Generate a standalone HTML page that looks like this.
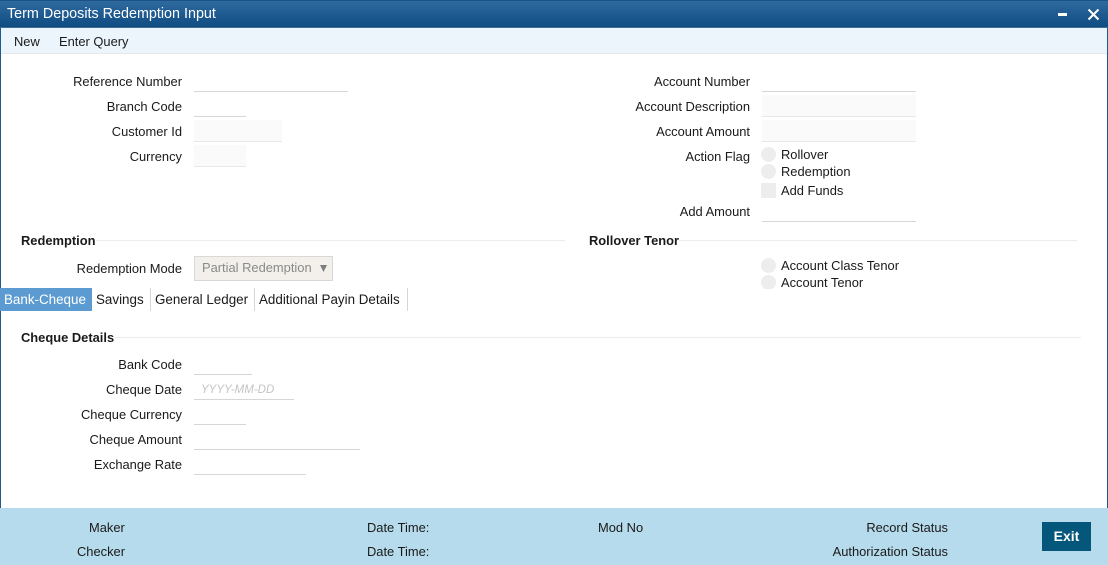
<!DOCTYPE html>
<html><head><meta charset="utf-8">
<style>
html,body{margin:0;padding:0;background:#fff}
#p{position:relative;width:1108px;height:565px;overflow:hidden;background:#fff;font-family:"Liberation Sans",Arial,sans-serif;font-size:12.9px;color:#1a1a1a}
#p div{position:absolute;box-sizing:border-box}
.t{white-space:nowrap;height:20px;line-height:20px}
.l{white-space:nowrap;height:20px;line-height:20px;text-align:right;width:182px;left:0}
.l2{white-space:nowrap;height:20px;line-height:20px;text-align:right;width:750px;left:0}
.b{font-weight:bold}
.tab{font-size:13.4px}
.i{border-bottom:1px solid #d6d6d6;height:22px}
.ro{background:#fafafa;border-bottom:1px solid #e8e8e8}
.r{width:15px;height:15px;border-radius:50%;background:#eeeded}
.h{height:1px;background:#ececec}
</style></head><body>
<div id="p">
<div style="left:0;top:0;width:1108px;height:28px;background:linear-gradient(#2f6a9f,#0f4c82);border-top:1px solid #1a5288;border-bottom:1px solid #3d6f94"></div>
<div class="t" style="left:7px;top:4px;color:#fff;font-size:14.35px">Term Deposits Redemption Input</div>
<svg style="position:absolute;left:1058px;top:8px" width="42" height="14"><rect x="0" y="5" width="9" height="3" fill="#fff"/><path d="M30.5 1.5L40.5 11.5M40.5 1.5L30.5 11.5" stroke="#fff" stroke-width="2" fill="none"/></svg>
<div style="left:0;top:28px;width:1108px;height:26px;background:#edf5fc;border-bottom:1px solid #e4e8ea"></div>
<div class="t" style="left:14px;top:32px">New</div>
<div class="t" style="left:59px;top:32px">Enter Query</div>
<div style="left:0;top:28px;width:1px;height:480px;background:#1f5a8c"></div>
<div style="right:0;top:28px;width:1px;height:480px;background:#1f5a8c"></div>

<div class="l" style="top:72px">Reference Number</div>
<div class="i" style="left:194px;top:70px;width:154px"></div>
<div class="l" style="top:97px">Branch Code</div>
<div class="i" style="left:194px;top:95px;width:52px"></div>
<div class="l" style="top:122px">Customer Id</div>
<div class="i ro" style="left:194px;top:120px;width:88px"></div>
<div class="l" style="top:147px">Currency</div>
<div class="i ro" style="left:194px;top:145px;width:52px"></div>

<div class="l2" style="top:72px">Account Number</div>
<div class="i" style="left:762px;top:70px;width:154px"></div>
<div class="l2" style="top:97px">Account Description</div>
<div class="i ro" style="left:762px;top:95px;width:154px"></div>
<div class="l2" style="top:122px">Account Amount</div>
<div class="i ro" style="left:762px;top:120px;width:154px"></div>
<div class="l2" style="top:147px">Action Flag</div>
<div class="r" style="left:761px;top:147px"></div>
<div class="t" style="left:781px;top:145px">Rollover</div>
<div class="r" style="left:761px;top:164px"></div>
<div class="t" style="left:781px;top:162px">Redemption</div>
<div style="left:761px;top:183px;width:15px;height:15px;background:#eeeded"></div>
<div class="t" style="left:781px;top:181px">Add Funds</div>
<div class="l2" style="top:202px">Add Amount</div>
<div class="i" style="left:762px;top:200px;width:154px"></div>

<div class="t b" style="left:21px;top:231px">Redemption</div>
<div class="h" style="left:96px;top:240px;width:469px"></div>
<div class="t b" style="left:589px;top:231px">Rollover Tenor</div>
<div class="h" style="left:679px;top:240px;width:398px"></div>
<div class="l" style="top:259px">Redemption Mode</div>
<div style="left:194px;top:256px;width:139px;height:25px;background:#f3f0eb;border:1px solid #d8d8d8"></div>
<div class="t" style="left:202px;top:258px;color:#8a8a8a">Partial Redemption</div>
<svg style="position:absolute;left:320px;top:265px" width="7" height="7"><path d="M0 0H7L3.5 7Z" fill="#7d7d7d"/></svg>
<div class="r" style="left:761px;top:258px"></div>
<div class="t" style="left:781px;top:256px">Account Class Tenor</div>
<div style="left:761px;top:275px;width:15px;height:14px;overflow:hidden"><div class="r" style="left:0;top:0"></div></div>
<div class="t" style="left:781px;top:273px">Account Tenor</div>

<div class="t tab" style="left:0;top:288px;width:92px;height:23px;line-height:23px;background:#5b9bd1;color:#fff;padding-left:4px">Bank-Cheque</div>
<div class="t tab" style="left:96px;top:290px">Savings</div>
<div style="left:150px;top:288px;width:1px;height:23px;background:#d6d6d6"></div>
<div class="t tab" style="left:155px;top:290px">General Ledger</div>
<div style="left:254px;top:288px;width:1px;height:23px;background:#d6d6d6"></div>
<div class="t tab" style="left:259px;top:290px">Additional Payin Details</div>
<div style="left:407px;top:288px;width:1px;height:23px;background:#d6d6d6"></div>

<div class="t b" style="left:21px;top:328px">Cheque Details</div>
<div class="h" style="left:114px;top:337px;width:967px"></div>
<div class="l" style="top:355px">Bank Code</div>
<div class="i" style="left:194px;top:353px;width:58px"></div>
<div class="l" style="top:380px">Cheque Date</div>
<div class="i" style="left:194px;top:378px;width:100px"></div>
<div class="t" style="left:201px;top:380px;font-style:italic;font-size:11.5px;color:#c4c4c4">YYYY-MM-DD</div>
<div class="l" style="top:405px">Cheque Currency</div>
<div class="i" style="left:194px;top:403px;width:52px"></div>
<div class="l" style="top:430px">Cheque Amount</div>
<div class="i" style="left:194px;top:428px;width:166px"></div>
<div class="l" style="top:455px">Exchange Rate</div>
<div class="i" style="left:194px;top:453px;width:112px"></div>

<div style="left:0;top:508px;width:1108px;height:57px;background:#b6dbec"></div>
<div class="t" style="left:89px;top:518px">Maker</div>
<div class="t" style="left:77px;top:542px">Checker</div>
<div class="t" style="left:367px;top:518px">Date Time:</div>
<div class="t" style="left:367px;top:542px">Date Time:</div>
<div class="t" style="left:598px;top:518px">Mod No</div>
<div class="l" style="left:0;width:948px;top:518px">Record Status</div>
<div class="l" style="left:0;width:948px;top:542px">Authorization Status</div>
<div class="b" style="left:1042px;top:522px;width:49px;height:29px;line-height:29px;background:#04567b;color:#fff;text-align:center;font-size:14px">Exit</div>
</div>
</body></html>
